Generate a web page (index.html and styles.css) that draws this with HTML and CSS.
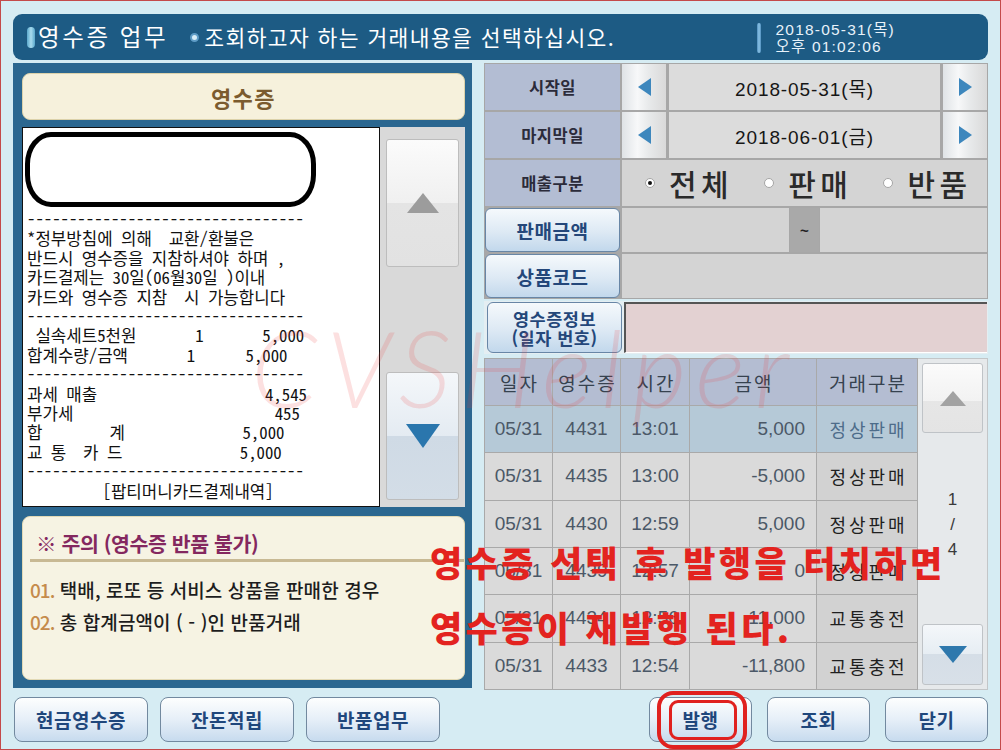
FILE: index.html
```html
<!DOCTYPE html>
<html lang="ko">
<head>
<meta charset="utf-8">
<title>영수증 업무</title>
<link rel="stylesheet" href="styles.css">
</head>
<body>
<div class="frame">
  <header class="topbar">
    <span class="pill"></span>
    <span class="title">영수증 업무</span>
    <span class="dot"></span>
    <span class="msg">조회하고자 하는 거래내용을 선택하십시오.</span>
    <span class="vbar"></span>
    <div class="clock"><div>2018-05-31(목)</div><div>오후 01:02:06</div></div>
  </header>

  <main class="content">
    <section class="left">
      <div class="ltitle">영수증</div>
      <div class="receipt-row">
        <div class="receipt">
          <div class="blot"></div>
<pre class="rtext">---------------------------------
*정부방침에 의해  교환/환불은
반드시 영수증을 지참하셔야 하며 ,
카드결제는 30일(06월30일 )이내
카드와 영수증 지참  시 가능합니다
---------------------------------
 실속세트5천원       1       5,000
합계수량/금액       1      5,000
---------------------------------
과세 매출                    4,545
부가세                        455
합        계              5,000
교 통  카 드              5,000
---------------------------------
         [팝티머니카드결제내역]</pre>
        </div>
        <div class="rscroll">
          <div class="sbtn up"><span class="tri-up"></span></div>
          <div class="sbtn down"><span class="tri-down"></span></div>
        </div>
      </div>
      <div class="notice">
        <div class="nhead">※ 주의 (영수증 반품 불가)</div>
        <div class="nline"></div>
        <div class="nitem"><span class="num">01.</span> 택배, 로또 등 서비스 상품을 판매한 경우</div>
        <div class="nitem"><span class="num">02.</span> 총 합계금액이 ( - )인 반품거래</div>
      </div>
    </section>

    <section class="right">
      <div class="form">
        <div class="label">시작일</div>
        <div class="dates">
          <div class="arrow"><span class="tri-left"></span></div>
          <div class="datebox">2018-05-31(목)</div>
          <div class="arrow"><span class="tri-right"></span></div>
        </div>
        <div class="label">마지막일</div>
        <div class="dates">
          <div class="arrow"><span class="tri-left"></span></div>
          <div class="datebox">2018-06-01(금)</div>
          <div class="arrow"><span class="tri-right"></span></div>
        </div>
        <div class="label">매출구분</div>
        <div class="radios">
          <span class="opt"><span class="radio on"></span>전체</span>
          <span class="opt"><span class="radio"></span>판매</span>
          <span class="opt"><span class="radio"></span>반품</span>
        </div>
        <div class="fbtn">판매금액</div>
        <div class="range">
          <div class="field"></div>
          <div class="tilde">~</div>
          <div class="field"></div>
        </div>
        <div class="fbtn">상품코드</div>
        <div class="field"></div>
      </div>

      <div class="info">
        <div class="fbtn two">영수증정보<br>(일자 번호)</div>
        <div class="pink"></div>
      </div>

      <div class="list">
        <table class="tx">
          <thead>
            <tr><th>일자</th><th>영수증</th><th>시간</th><th>금액</th><th>거래구분</th></tr>
          </thead>
          <tbody>
            <tr class="sel"><td>05/31</td><td>4431</td><td>13:01</td><td class="amt">5,000</td><td class="kind">정상판매</td></tr>
            <tr><td>05/31</td><td>4435</td><td>13:00</td><td class="amt">-5,000</td><td class="kind">정상판매</td></tr>
            <tr><td>05/31</td><td>4430</td><td>12:59</td><td class="amt">5,000</td><td class="kind">정상판매</td></tr>
            <tr><td>05/31</td><td>4439</td><td>12:57</td><td class="amt">0</td><td class="kind">정상판매</td></tr>
            <tr><td>05/31</td><td>4434</td><td>12:56</td><td class="amt">11,000</td><td class="kind">교통충전</td></tr>
            <tr><td>05/31</td><td>4433</td><td>12:54</td><td class="amt">-11,800</td><td class="kind">교통충전</td></tr>
          </tbody>
        </table>
        <div class="tscroll">
          <div class="tbtn up"><span class="tri-up small"></span></div>
          <div class="page">1<br>/<br>4</div>
          <div class="tbtn down"><span class="tri-down small"></span></div>
        </div>
      </div>
    </section>
  </main>

  <footer class="bottom">
    <div class="bgroup">
      <div class="bbtn">현금영수증</div>
      <div class="bbtn">잔돈적립</div>
      <div class="bbtn">반품업무</div>
    </div>
    <div class="bgroup right-group">
      <div class="bbtn small">발행</div>
      <div class="bbtn small">조회</div>
      <div class="bbtn small">닫기</div>
    </div>
  </footer>

  <div class="watermark">CVSHelper</div>
  <div class="annot a1">영수증 선택 후 발행을 터치하면</div>
  <div class="annot a2">영수증이 재발행 된다.</div>
  <div class="ring outer"></div>
  <div class="ring inner"></div>
</div>
</body>
</html>
```

FILE: styles.css
```css
* { box-sizing: border-box; }
html, body { margin: 0; padding: 0; }
body {
  font-family: "Liberation Sans", "Noto Sans CJK KR", sans-serif;
  background: #d7edf4;
}
.frame {
  position: relative;
  width: 1001px;
  height: 750px;
  border: 1px solid #c44a4a;
  background: #d6ecf3;
  padding: 13px 12px 0 12px;
  overflow: hidden;
}

/* header */
.topbar {
  height: 46px;
  background: #1d5b84;
  border-radius: 9px;
  display: flex;
  align-items: center;
  color: #fff;
  padding-left: 14px;
}
.pill {
  width: 8px; height: 21px;
  border-radius: 4px;
  background: linear-gradient(90deg, #5aa8cc, #a8dcef 50%, #5aa8cc);
  margin-right: 3px;
}
.title {
  font-family: "Noto Sans CJK KR", sans-serif;
  font-size: 23.5px;
  letter-spacing: 2.6px;
  line-height: 1;
}
.dot {
  width: 9px; height: 9px;
  border-radius: 50%;
  background: #d8eef8;
  border: 2px solid #5e9cc6;
  margin-left: 22px;
  margin-right: 5px;
}
.msg {
  font-family: "Noto Sans CJK KR", sans-serif;
  font-size: 21.5px;
  letter-spacing: 1.4px;
  line-height: 1;
}
.vbar {
  width: 4px; height: 30px;
  border-radius: 2px;
  background: linear-gradient(90deg, #4f8fbf, #8cc4e6, #4f8fbf);
  margin-left: auto;
  margin-top: 2px;
}
.clock {
  font-family: "Liberation Sans", "Noto Sans CJK KR", sans-serif;
  font-size: 15.5px;
  letter-spacing: 1.2px;
  line-height: 17px;
  color: #e8f2fa;
  margin-left: 15px;
  margin-right: 93px;
  margin-top: 1px;
}

/* layout */
.content {
  display: flex;
  gap: 12px;
  margin-top: 3px;
  height: 627px;
}
.left {
  width: 459px;
  height: 625px;
  background: #2b6790;
  padding: 10px 7px 8px 9px;
  display: flex;
  flex-direction: column;
}
.ltitle {
  height: 47px;
  background: #f6f1dc;
  border: 1px solid #dcd2aa;
  border-radius: 8px;
  font-family: "Noto Sans CJK KR", sans-serif;
  font-weight: 700;
  font-size: 22px;
  color: #7b5b2e;
  display: flex;
  align-items: center;
  justify-content: center;
  letter-spacing: 1.5px;
}
.receipt-row {
  margin-top: 7px;
  height: 380px;
  display: flex;
}
.receipt {
  width: 358px;
  background: #fff;
  border: 1px solid #111;
  padding: 4px 0 0 2px;
}
.blot {
  width: 291px;
  height: 75px;
  border: 5px solid #000;
  border-radius: 26px / 32px;
}
.rtext {
  margin: 3px 0 0 2px;
  font-family: "Noto Sans Mono CJK KR", "Liberation Mono", "Noto Sans CJK KR", monospace;
  font-size: 16.8px;
  letter-spacing: 0;
  line-height: 19.4px;
  color: #111;
  white-space: pre;
}
.rscroll {
  width: 85px;
  background: #d9d9d9;
  padding: 12px 6px 7px 6px;
  display: flex;
  flex-direction: column;
  justify-content: space-between;
}
.sbtn {
  height: 128px;
  border: 1px solid #bdbdbd;
  border-radius: 3px;
  display: flex;
  align-items: center;
  justify-content: center;
}
.sbtn.up { background: linear-gradient(180deg, #fbfbfb, #f0f0f0 50%, #e4e4e4 50%, #e2e2e2); }
.sbtn.down { background: linear-gradient(180deg, #f4f7fa, #e4ebf2 50%, #cfdae5 50%, #d3dde7); }
.tri-up {
  width: 0; height: 0;
  border-left: 16px solid transparent;
  border-right: 16px solid transparent;
  border-bottom: 20px solid #9c9c9c;
}
.tri-down {
  width: 0; height: 0;
  border-left: 17px solid transparent;
  border-right: 17px solid transparent;
  border-top: 24px solid #2a76ad;
}
.tri-up.small {
  border-left-width: 13px; border-right-width: 13px; border-bottom-width: 15px;
  border-bottom-color: #a2a2a2;
}
.tri-down.small {
  border-left-width: 14px; border-right-width: 14px; border-top-width: 17px;
  border-top-color: #2e78ad;
}

.notice {
  margin-top: 9px;
  height: 164px;
  background: #f6f3e3;
  border: 1px solid #e2d9b5;
  border-radius: 8px;
  padding-top: 13px;
  font-family: "Noto Sans CJK KR", sans-serif;
}
.nhead {
  color: #84285f;
  font-weight: 700;
  font-size: 20.5px;
  padding-left: 13px;
  letter-spacing: -0.4px;
  line-height: 26px;
}
.nline {
  height: 3px;
  background: #c8b994;
  margin: 3px 0 0 7px;
}
.nitem {
  font-size: 19px;
  font-weight: 500;
  color: #1d1d1d;
  padding-left: 7px;
  line-height: 26px;
  letter-spacing: 0.1px;
}
.nline + .nitem { margin-top: 15px; }
.nitem + .nitem { margin-top: 6px; }
.num {
  color: #c58b4c;
  font-size: 19px;
  font-weight: 500;
  letter-spacing: -1px;
}

/* right */
.right {
  width: 504px;
  display: flex;
  flex-direction: column;
}
.form {
  background: #a7a7a7;
  padding: 1px;
  display: grid;
  grid-template-columns: 135px 1fr;
  grid-template-rows: 46px 46px 46px 44px 44px;
  gap: 2px;
}
.label {
  background: #b3bdd3;
  display: flex;
  align-items: center;
  justify-content: center;
  font-family: "Noto Sans CJK KR", sans-serif;
  font-weight: 700;
  font-size: 16.5px;
  color: #2b2b3a;
  letter-spacing: 0.5px;
}
.dates {
  display: flex;
  gap: 3px;
}
.arrow {
  width: 44px;
  background: linear-gradient(90deg, #dfe3e6, #f7f8f9 35%, #e8eaeb 60%, #d9d9d9);
  display: flex;
  align-items: center;
  justify-content: center;
}
.tri-left {
  width: 0; height: 0;
  border-top: 9px solid transparent;
  border-bottom: 9px solid transparent;
  border-right: 13px solid #3d87bd;
}
.tri-right {
  width: 0; height: 0;
  border-top: 9px solid transparent;
  border-bottom: 9px solid transparent;
  border-left: 13px solid #3d87bd;
}
.datebox {
  flex: 1;
  background: #dcdcdc;
  display: flex;
  align-items: center;
  justify-content: center;
  font-family: "Liberation Sans", "Noto Sans CJK KR", sans-serif;
  font-size: 19px;
  color: #161616;
  letter-spacing: 0.9px;
}
.radios {
  background: #d4d4d4;
  display: flex;
  align-items: center;
  padding-left: 23px;
  gap: 31px;
  font-family: "Noto Sans CJK KR", sans-serif;
  font-size: 30px;
  font-weight: 500;
  color: #2a2a2a;
  letter-spacing: 4.5px;
}
.opt { display: flex; align-items: center; }
.radio {
  width: 10px; height: 10px;
  border-radius: 50%;
  background: #fff;
  border: 1px solid #a5a5a5;
  margin-right: 14px;
  position: relative;
}
.radio.on::after {
  content: "";
  position: absolute;
  left: 2px; top: 2px;
  width: 4px; height: 4px;
  border-radius: 50%;
  background: #111;
}
.fbtn {
  background: linear-gradient(180deg, #f5f9fc, #dde9f4 55%, #c2d8ec);
  border: 1px solid #6886a6;
  border-radius: 6px;
  display: flex;
  align-items: center;
  justify-content: center;
  font-family: "Noto Sans CJK KR", sans-serif;
  font-weight: 700;
  font-size: 19px;
  color: #24477a;
  text-align: center;
  letter-spacing: 0.5px;
}
.fbtn.two { font-size: 17.5px; line-height: 19px; }
.range { display: flex; gap: 1px; }
.field { background: #d4d4d4; flex: 1; }
.tilde {
  width: 29px;
  background: #a9a9a9;
  display: flex;
  align-items: center;
  justify-content: center;
  font-size: 15px;
  font-weight: 700;
  color: #222;
}
.info {
  margin-top: 2px;
  height: 53px;
  display: grid;
  grid-template-columns: 135px 1fr;
  gap: 2px;
  padding: 1px 1px 1px 3px;
  background: #e4eef2;
}
.pink {
  background: #e3d1d2;
  border-top: 2px solid #555;
  border-left: 2px solid #555;
  border-bottom: 1px solid #fff;
}
.list {
  margin-top: 4px;
  display: flex;
  height: 332px;
}
.tx {
  border-collapse: collapse;
  width: 433px;
  table-layout: fixed;
  font-family: "Liberation Sans", "Noto Sans CJK KR", sans-serif;
}
.tx th, .tx td {
  border: 1px solid #a9a9a9;
  padding: 0;
  text-align: center;
}
.tx th {
  height: 47px;
  background: #b4bdd2;
  font-family: "Noto Sans CJK KR", sans-serif;
  font-weight: 400;
  font-size: 19px;
  color: #36424f;
  letter-spacing: 2px;
  padding-left: 2px;
}
.tx th:nth-child(1) { width: 68px; }
.tx th:nth-child(2) { width: 68px; }
.tx th:nth-child(3) { width: 69px; }
.tx th:nth-child(4) { width: 127px; }
.tx th:nth-child(5) { width: 101px; }
.tx td {
  height: 47px;
  background: #dadada;
  font-size: 19px;
  color: #4b5867;
}
.tx td.amt { text-align: right; padding-right: 11px; }
.tx td.kind {
  background: #d2d2d2;
  font-family: "Noto Sans CJK KR", sans-serif;
  color: #1f1f1f;
  letter-spacing: 3px;
  padding-left: 3px;
  font-size: 18px;
}
.tx tr.sel td { background: #b5c9d7; }
.tx tr.sel td.kind { color: #4d6c8a; }
.tscroll {
  flex: 1;
  background: #e6e9eb;
  border: 1px solid #c3c6c8;
  border-left: none;
  padding: 4px 4px 4px 4px;
  display: flex;
  flex-direction: column;
  align-items: center;
}
.tbtn {
  width: 61px;
  height: 70px;
  border: 1px solid #bfc3c7;
  border-radius: 3px;
  display: flex;
  align-items: center;
  justify-content: center;
}
.tbtn.up { background: linear-gradient(180deg, #fbfbfb, #f2f2f2 55%, #e6e6e6 55%, #e4e4e4); }
.tbtn.down { background: linear-gradient(180deg, #f4f7fa, #e6edf3 50%, #d5dee7 50%, #d8e0e8); margin-top: auto; height: 61px; }
.page {
  margin-top: 54px;
  font-size: 17px;
  line-height: 25px;
  color: #3a3a3a;
  text-align: center;
}

/* footer */
.bottom {
  margin-top: 7px;
  height: 46px;
  display: flex;
  justify-content: space-between;
  padding-left: 1px;
}
.bgroup { display: flex; gap: 12px; }
.right-group { gap: 15px; }
.bbtn {
  width: 134px;
  height: 45px;
  background: linear-gradient(180deg, #fdfefe, #e6eff8 50%, #c7dbee);
  border: 1px solid #72899f;
  border-radius: 8px;
  display: flex;
  align-items: center;
  justify-content: center;
  font-family: "Noto Sans CJK KR", sans-serif;
  font-weight: 700;
  font-size: 19px;
  color: #1f477c;
  letter-spacing: 0.5px;
}
.bbtn.small { width: 103px; }

/* overlays */
.watermark {
  position: absolute;
  left: 250px;
  top: 303px;
  font-family: "Lato", "Liberation Sans", sans-serif;
  font-weight: 300;
  font-style: italic;
  font-size: 106px;
  letter-spacing: 9px;
  color: rgba(236, 60, 60, 0.16);
  pointer-events: none;
  line-height: 1.2;
}
.annot {
  position: absolute;
  left: 429px;
  font-family: "Noto Sans CJK KR", sans-serif;
  font-weight: 900;
  font-size: 35px;
  color: #e3231f;
  letter-spacing: 3.4px;
  line-height: 42px;
  white-space: nowrap;
}
.a1 { top: 540px; }
.a2 { top: 605px; }
.ring {
  position: absolute;
  border: 3px solid #e0211f;
}
.ring.outer {
  left: 656px; top: 690px;
  width: 90px; height: 58px;
  border-radius: 16px;
  border-width: 4px;
}
.ring.inner {
  left: 668px; top: 699px;
  width: 68px; height: 40px;
  border-radius: 9px;
}
```
